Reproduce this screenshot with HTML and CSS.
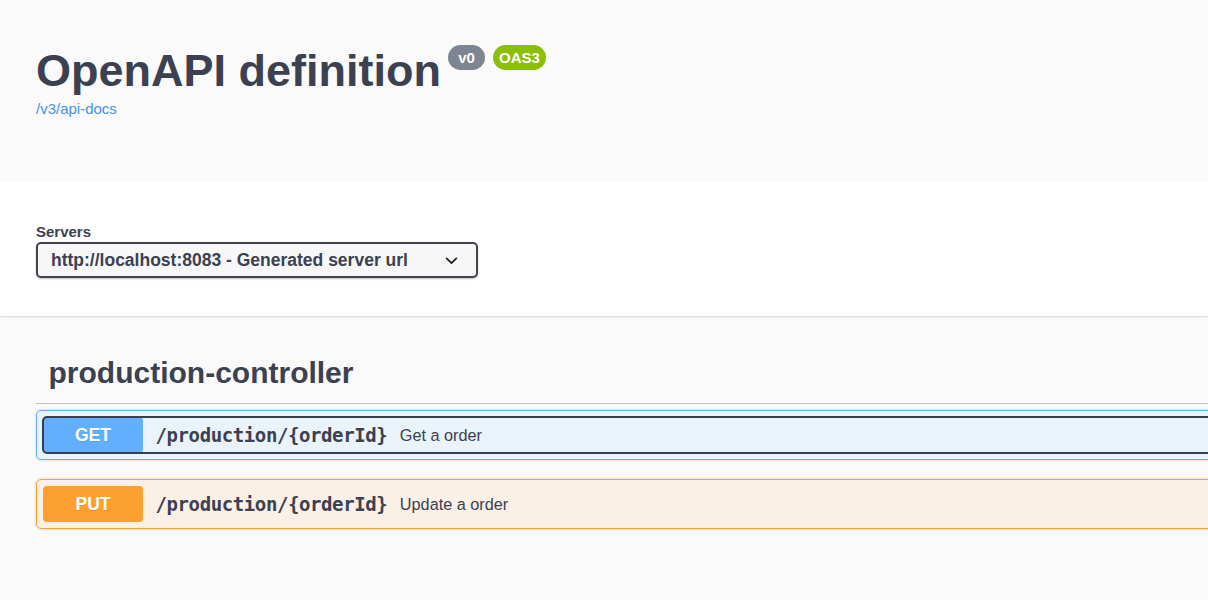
FILE: index.html
```html
<!DOCTYPE html>
<html lang="en">
<head>
<meta charset="utf-8">
<title>Swagger UI</title>
<link rel="stylesheet" href="styles.css">
</head>
<body>
<div class="info-wrap">
  <div class="wrapper">
    <div class="title-row">
      <h2 class="title">OpenAPI definition</h2>
      <span class="badge badge-version">v0</span>
      <span class="badge badge-oas">OAS3</span>
    </div>
    <a class="link" href="#">/v3/api-docs</a>
  </div>
</div>
<div class="scheme">
  <div class="wrapper">
    <div class="servers-title">Servers</div>
    <div class="select">
      <span>http://localhost:8083 - Generated server url</span>
      <svg class="chevron" viewBox="0 0 20 20" width="25" height="25"><path d="M13.418 7.859a.695.695 0 0 1 .978 0 .68.68 0 0 1 0 .969l-3.908 3.830a.697.697 0 0 1-.979 0l-3.908-3.830a.68.68 0 0 1 0-.969.695.695 0 0 1 .978 0L10 11z" fill="#222"/></svg>
    </div>
  </div>
</div>
<div class="wrapper section">
  <h3 class="tag">production-controller</h3>
  <div class="opblock opblock-get">
    <div class="control focused">
      <span class="method">GET</span>
      <span class="path">/production/{orderId}</span>
      <span class="desc">Get a order</span>
    </div>
  </div>
  <div class="opblock opblock-put">
    <div class="control">
      <span class="method">PUT</span>
      <span class="path">/production/{orderId}</span>
      <span class="desc">Update a order</span>
    </div>
  </div>
</div>
</body>
</html>
```
FILE: styles.css
```css
html, body {
  overflow: hidden;
}
body {
  margin: 0;
  background: #fafafa;
  font-family: "Liberation Sans", Arial, sans-serif;
  color: #3b4151;
}
.wrapper {
  width: 1600px;
  padding-left: 36px;
  box-sizing: border-box;
}
.info-wrap {
  height: 181px;
  padding-top: 45px;
  box-sizing: border-box;
}
.title-row {
  display: flex;
  align-items: flex-start;
}
.title {
  margin: 0;
  font-size: 45px;
  line-height: 52px;
  font-weight: bold;
  color: #3b4151;
}
.badge {
  height: 25px;
  line-height: 25px;
  border-radius: 13px;
  color: #fff;
  font-size: 15px;
  font-weight: bold;
  text-align: center;
}
.badge-version {
  width: 37px;
  margin-left: 7px;
  background: #7d8492;
}
.badge-oas {
  width: 53px;
  margin-left: 8px;
  background: #89bf04;
}
.link {
  display: inline-block;
  margin-top: 3px;
  font-size: 15px;
  line-height: 17px;
  color: #4990e2;
  text-decoration: none;
}
.scheme {
  position: relative;
  height: 135px;
  padding-top: 42px;
  box-sizing: border-box;
  background: #fff;
  box-shadow: 0 1px 2px 0 rgba(0, 0, 0, 0.15);
}
.servers-title {
  font-size: 15px;
  line-height: 17px;
  font-weight: bold;
  margin-bottom: 2px;
}
.select {
  width: 442px;
  height: 36px;
  box-sizing: border-box;
  border: 2px solid #41444e;
  border-radius: 5px;
  background: #f7f7f7;
  box-shadow: 0 1px 2px 0 rgba(0, 0, 0, 0.25);
  display: flex;
  align-items: center;
  justify-content: space-between;
  padding: 0 12.5px 0 13px;
  font-size: 17.5px;
  font-weight: bold;
  color: #3b4151;
}
.chevron {
  display: block;
}
.section {
  padding-top: 27px;
}
.tag {
  margin: 0 0 6.5px;
  font-size: 30px;
  line-height: 34.5px;
  font-weight: bold;
  padding: 12.5px 25px 12.5px 12.5px;
  border-bottom: 1px solid rgba(59, 65, 81, 0.3);
}
.opblock {
  display: flex;
  align-items: center;
  padding: 6px;
  margin-bottom: 19px;
  border: 1px solid;
  border-radius: 5px;
  box-shadow: 0 0 3px rgba(0, 0, 0, 0.19);
}
.opblock-get {
  border-color: #61affe;
  background: rgba(97, 175, 254, 0.1);
}
.opblock-put {
  border-color: #fca130;
  background: rgba(252, 161, 48, 0.1);
}
.control {
  flex: 1;
  display: flex;
  align-items: center;
  border-radius: 4px;
}
.control.focused {
  outline: 2px solid #383e4b;
  outline-offset: -1px;
}
.method {
  width: 100px;
  height: 36px;
  line-height: 36px;
  text-align: center;
  border-radius: 4px;
  color: #fff;
  font-size: 17.5px;
  font-weight: bold;
  text-shadow: 0 1px 0 rgba(0, 0, 0, 0.1);
}
.opblock-get .method {
  background: #61affe;
}
.opblock-put .method {
  background: #fca130;
}
.path {
  padding: 0 12.5px;
  font-family: "DejaVu Sans Mono", "Liberation Mono", monospace;
  font-weight: bold;
  font-size: 19px;
  letter-spacing: -0.4px;
  color: #3b4151;
}
.desc {
  font-size: 16.25px;
  color: #3b4151;
}
```
